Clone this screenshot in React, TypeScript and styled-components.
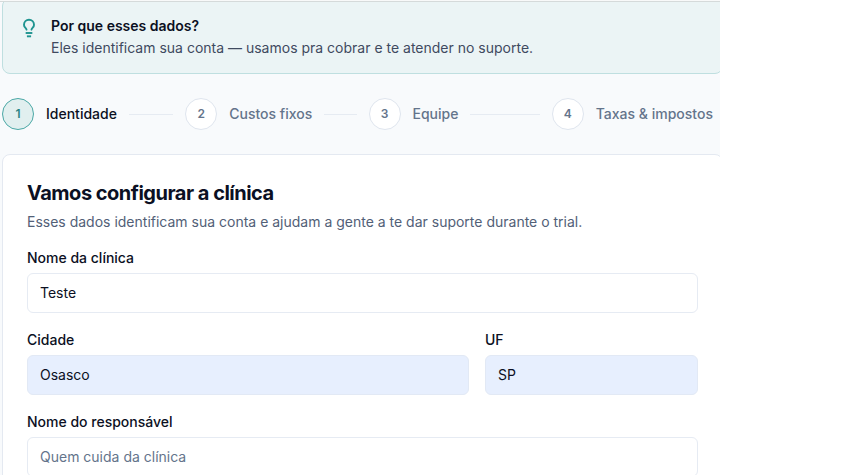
import React from 'react';
import styled, { createGlobalStyle } from 'styled-components';

const GlobalStyle = createGlobalStyle`
  * { box-sizing: border-box; }
  body {
    margin: 0;
    background: #fff;
    color: #0b1023;
    font-family: Inter, "Liberation Sans", sans-serif;
    font-size: 14px;
    line-height: 20px;
  }
`;

const Page = styled.div`
  display: grid;
  grid-template-columns: minmax(0, 1fr) 124px;
  height: 100vh;
  overflow: hidden;
`;

const Panel = styled.main`
  background: #f8fafc;
  overflow: hidden;
`;

const HeaderEdge = styled.header`
  position: relative;
  z-index: 1;
  height: 2px;
  background: #f8f9f9;
  border-bottom: 1px solid #d5dada;
`;

const Content = styled.div`
  display: flex;
  flex-direction: column;
  gap: 24px;
  margin: -4px -3px 0 2px;
`;

const Notice = styled.aside`
  display: flex;
  gap: 12px;
  padding: 17px 16px 15px;
  background: #ebf4f5;
  border: 1px solid #bfdfe0;
  border-radius: 8px;
`;

const NoticeIcon = styled.svg`
  flex: none;
  margin-top: 2px;
  color: #1f9490;
`;

const NoticeTitle = styled.p`
  margin: 0 0 2px;
  font-weight: 600;
`;

const NoticeText = styled.p`
  margin: 0;
  color: #3f4a5f;
`;

const Steps = styled.ol`
  display: grid;
  grid-template-columns: repeat(4, minmax(0, 1fr));
  gap: 12px;
  margin: 0;
  padding: 0;
  list-style: none;
`;

const Step = styled.li<{ $active?: boolean }>`
  display: flex;
  align-items: center;
  gap: 12px;
  font-weight: 500;
  white-space: nowrap;
  color: ${(p) => (p.$active ? '#0b1023' : '#64748b')};
`;

const StepNumber = styled.span<{ $active?: boolean }>`
  display: flex;
  flex: none;
  align-items: center;
  justify-content: center;
  width: 32px;
  height: 32px;
  border: 1px solid ${(p) => (p.$active ? '#4ba8a6' : '#dfe5ee')};
  border-radius: 50%;
  background: ${(p) => (p.$active ? '#e1efef' : '#fff')};
  color: ${(p) => (p.$active ? '#2b8583' : '#64748b')};
  font-size: 12px;
  font-weight: 600;
`;

const StepLine = styled.span`
  flex: 1;
  height: 1px;
  background: #e6ebf2;
`;

const Card = styled.section`
  padding: 24px;
  background: #fff;
  border: 1px solid #e4e9f1;
  border-radius: 8px;
`;

const Title = styled.h1`
  margin: 0;
  font-size: 20px;
  line-height: 28px;
  font-weight: 700;
  letter-spacing: -0.025em;
`;

const Subtitle = styled.p`
  margin: 5px 0 16px;
  color: #526077;
`;

const Form = styled.form`
  display: grid;
  grid-template-columns: repeat(3, minmax(0, 1fr));
  gap: 17px 16px;
`;

const Field = styled.div<{ $span: number }>`
  display: flex;
  flex-direction: column;
  gap: 5px;
  grid-column: span ${(p) => p.$span};
`;

const Label = styled.label`
  font-weight: 500;
`;

const Input = styled.input<{ $filled?: boolean }>`
  width: 100%;
  height: 40px;
  padding: 0 12px 1px;
  border: 1px solid ${(p) => (p.$filled ? '#e2e9f5' : '#e6ebf3')};
  border-radius: 6px;
  background: ${(p) => (p.$filled ? '#e7effe' : '#fff')};
  color: #0b1023;
  font: inherit;
  outline: none;
  &::placeholder { color: #64748b; opacity: 1; }
`;

const steps = ['Identidade', 'Custos fixos', 'Equipe', 'Taxas & impostos'];

const fields = [
  { id: 'clinica', label: 'Nome da clínica', value: 'Teste', span: 3 },
  { id: 'cidade', label: 'Cidade', value: 'Osasco', span: 2, filled: true },
  { id: 'uf', label: 'UF', value: 'SP', span: 1, filled: true },
  { id: 'responsavel', label: 'Nome do responsável', placeholder: 'Quem cuida da clínica', span: 3 },
];

export default function App() {
  return (
    <>
      <GlobalStyle />
      <Page>
        <Panel>
          <HeaderEdge />
          <Content>
            <Notice>
              <NoticeIcon
                width={20}
                height={20}
                viewBox="0 0 24 24"
                fill="none"
                stroke="currentColor"
                strokeWidth={2.3}
                aria-hidden
              >
                <path d="M15 14c.2-1 .7-1.7 1.5-2.5 1-.9 1.5-2.2 1.5-3.5A6 6 0 0 0 6 8c0 1 .2 2.2 1.5 3.5.7.7 1.3 1.5 1.5 2.5" strokeLinecap="round" />
                <path d="M8 18h8" />
                <path d="M9.5 22h5" />
              </NoticeIcon>
              <div>
                <NoticeTitle>Por que esses dados?</NoticeTitle>
                <NoticeText>Eles identificam sua conta — usamos pra cobrar e te atender no suporte.</NoticeText>
              </div>
            </Notice>
            <Steps>
              {steps.map((name, i) => (
                <Step key={name} $active={i === 0} aria-current={i === 0 ? 'step' : undefined}>
                  <StepNumber $active={i === 0}>{i + 1}</StepNumber>
                  <span>{name}</span>
                  {i < steps.length - 1 && <StepLine />}
                </Step>
              ))}
            </Steps>
            <Card>
              <Title>Vamos configurar a clínica</Title>
              <Subtitle>Esses dados identificam sua conta e ajudam a gente a te dar suporte durante o trial.</Subtitle>
              <Form>
                {fields.map((f) => (
                  <Field key={f.id} $span={f.span}>
                    <Label htmlFor={f.id}>{f.label}</Label>
                    <Input id={f.id} defaultValue={f.value} placeholder={f.placeholder} $filled={f.filled} />
                  </Field>
                ))}
              </Form>
            </Card>
          </Content>
        </Panel>
      </Page>
    </>
  );
}
